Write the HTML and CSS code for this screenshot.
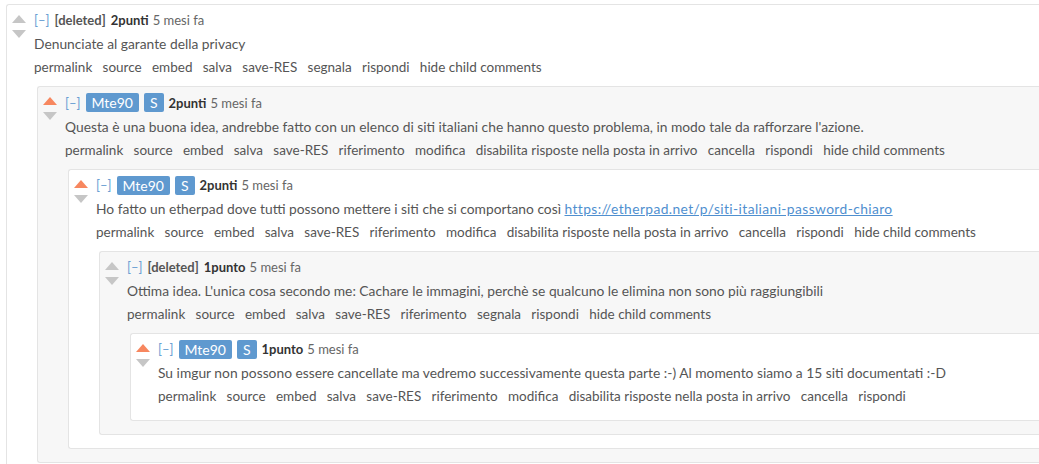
FILE: index.html
```html
<!DOCTYPE html>
<html lang="it">
<head>
<meta charset="utf-8">
<title>Commenti</title>
<link rel="stylesheet" href="styles.css">
</head>
<body>
<div class="comment odd">
  <div class="arrows"><span class="up"></span><span class="down"></span></div>
  <div class="entry">
    <div class="tagline"><span class="expand">[–]</span><span class="author-del">[deleted]</span><span class="score">2punti</span><span class="time">5 mesi fa</span></div>
    <div class="md">Denunciate al garante della privacy</div>
    <ul class="buttons"><li>permalink</li><li>source</li><li>embed</li><li>salva</li><li>save-RES</li><li>segnala</li><li>rispondi</li><li>hide child comments</li></ul>

    <div class="comment even">
      <div class="arrows"><span class="up voted"></span><span class="down"></span></div>
      <div class="entry">
        <div class="tagline has-badge"><span class="expand">[–]</span><span class="badge">Mte90</span><span class="badge">S</span><span class="score">2punti</span><span class="time">5 mesi fa</span></div>
        <div class="md">Questa è una buona idea, andrebbe fatto con un elenco di siti italiani che hanno questo problema, in modo tale da rafforzare l'azione.</div>
        <ul class="buttons"><li>permalink</li><li>source</li><li>embed</li><li>salva</li><li>save-RES</li><li>riferimento</li><li>modifica</li><li>disabilita risposte nella posta in arrivo</li><li>cancella</li><li>rispondi</li><li>hide child comments</li></ul>

        <div class="comment odd">
          <div class="arrows"><span class="up voted"></span><span class="down"></span></div>
          <div class="entry">
            <div class="tagline"><span class="expand">[–]</span><span class="badge">Mte90</span><span class="badge">S</span><span class="score">2punti</span><span class="time">5 mesi fa</span></div>
            <div class="md">Ho fatto un etherpad dove tutti possono mettere i siti che si comportano così <a class="link" href="#">https://etherpad.net/p/siti-italiani-password-chiaro</a></div>
            <ul class="buttons"><li>permalink</li><li>source</li><li>embed</li><li>salva</li><li>save-RES</li><li>riferimento</li><li>modifica</li><li>disabilita risposte nella posta in arrivo</li><li>cancella</li><li>rispondi</li><li>hide child comments</li></ul>

            <div class="comment even">
              <div class="arrows"><span class="up"></span><span class="down"></span></div>
              <div class="entry">
                <div class="tagline"><span class="expand">[–]</span><span class="author-del">[deleted]</span><span class="score">1punto</span><span class="time">5 mesi fa</span></div>
                <div class="md">Ottima idea. L'unica cosa secondo me: Cachare le immagini, perchè se qualcuno le elimina non sono più raggiungibili</div>
                <ul class="buttons"><li>permalink</li><li>source</li><li>embed</li><li>salva</li><li>save-RES</li><li>riferimento</li><li>segnala</li><li>rispondi</li><li>hide child comments</li></ul>

                <div class="comment odd">
                  <div class="arrows"><span class="up voted"></span><span class="down"></span></div>
                  <div class="entry">
                    <div class="tagline"><span class="expand">[–]</span><span class="badge">Mte90</span><span class="badge">S</span><span class="score">1punto</span><span class="time">5 mesi fa</span></div>
                    <div class="md">Su imgur non possono essere cancellate ma vedremo successivamente questa parte :-) Al momento siamo a 15 siti documentati :-D</div>
                    <ul class="buttons"><li>permalink</li><li>source</li><li>embed</li><li>salva</li><li>save-RES</li><li>riferimento</li><li>modifica</li><li>disabilita risposte nella posta in arrivo</li><li>cancella</li><li>rispondi</li></ul>
                  </div>
                </div>

              </div>
            </div>

          </div>
        </div>

      </div>
    </div>

  </div>
</div>
</body>
</html>
```
FILE: styles.css
```css
html, body {
  background: #ffffff;
}
body {
  margin: 4px 0 0 6px;
  font-family: Lato, "Liberation Sans", sans-serif;
  color: #555555;
  overflow: hidden;
}
.comment {
  display: flex;
  border: 1px solid #e4e4e4;
  border-right: none;
  border-radius: 3px 0 0 3px;
  padding: 5px 0 13px 5px;
}
.comment.odd { background: #ffffff; }
.comment.even { background: #f7f7f7; }
.entry > .comment { margin-top: 10px; margin-left: 3px; }
.arrows {
  width: 14px;
  flex: none;
  display: flex;
  flex-direction: column;
  padding-top: 5px;
  margin-right: 8px;
}
.up, .down {
  width: 0;
  height: 0;
  border-left: 7px solid transparent;
  border-right: 7px solid transparent;
}
.up { border-bottom: 8px solid #c6c6c6; }
.up.voted { border-bottom-color: #f7875f; }
.down { border-top: 8px solid #c6c6c6; margin-top: 7px; }
.entry {
  flex: 1;
  min-width: 0;
}
.tagline {
  display: flex;
  align-items: center;
  height: 20px;
  font-size: 13px;
  color: #666666;
  white-space: nowrap;
}
.tagline.has-badge { height: 21px; }
.expand { color: #6a9fd3; margin-right: 5px; }
.author-del { font-weight: bold; color: #555555; margin-right: 5px; }
.badge {
  background: #5f99cf;
  color: #ffffff;
  font-size: 14px;
  line-height: 19px;
  height: 19px;
  padding: 0 6px;
  border-radius: 2px;
  margin-right: 5px;
}
.score { font-weight: bold; color: #333333; margin-right: 4px; }
.time { color: #666666; }
.md {
  margin-top: 4px;
  font-size: 13.8px;
  line-height: 20px;
  color: #555555;
  white-space: nowrap;
}
.link { color: #4f8fcf; text-decoration: underline; letter-spacing: 0.4px; }
.buttons {
  list-style: none;
  margin: 4px 0 2px 0;
  padding: 0;
  display: flex;
  gap: 10.3px;
  font-size: 13.5px;
  line-height: 18px;
  color: #555555;
  white-space: nowrap;
}
```
